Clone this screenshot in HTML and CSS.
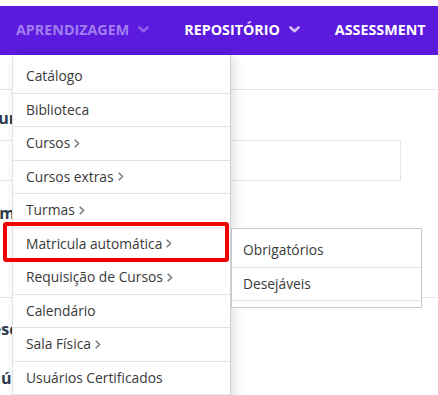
FILE: index.html
```html
<!DOCTYPE html>
<html lang="pt-BR">
	<head>
		<meta charset="UTF-8" />
		<meta name="viewport" content="width=device-width, initial-scale=1.0" />
		<title>Aprendizagem</title>
		<link rel="stylesheet" href="styles.css">
	</head>
	<body>
		<div class="topbar">
			<nav class="nav">
				<a class="nav-item active">APRENDIZAGEM
					<svg class="caret" width="11" height="7" viewBox="0 0 11 7"><path d="M1.5 1.5L5.5 5.2L9.5 1.5" /></svg>
				</a>
				<a class="nav-item">REPOSITÓRIO
					<svg class="caret" width="11" height="7" viewBox="0 0 11 7"><path d="M1.5 1.5L5.5 5.2L9.5 1.5" /></svg>
				</a>
				<a class="nav-item">ASSESSMENT</a>
			</nav>
		</div>

		<!-- page behind the dropdown -->
		<main class="page">
			<div class="page-head"></div>
			<h2 class="section-title t-cursos">Cursos</h2>
			<div class="field"></div>
			<h2 class="section-title t-admin">Administração</h2>
			<div class="rule"></div>
			<h2 class="section-title t-desc">Descrição</h2>
			<h2 class="section-title t-mult">Múltipla</h2>
		</main>

		<ul class="menu">
			<li>Catálogo</li>
			<li>Biblioteca</li>
			<li>Cursos <svg class="arrow" width="6" height="9" viewBox="0 0 6 9"><path d="M1.2 1.2L4.6 4.5L1.2 7.8" /></svg></li>
			<li>Cursos extras <svg class="arrow" width="6" height="9" viewBox="0 0 6 9"><path d="M1.2 1.2L4.6 4.5L1.2 7.8" /></svg></li>
			<li>Turmas <svg class="arrow" width="6" height="9" viewBox="0 0 6 9"><path d="M1.2 1.2L4.6 4.5L1.2 7.8" /></svg></li>
			<li>Matricula automática <svg class="arrow" width="6" height="9" viewBox="0 0 6 9"><path d="M1.2 1.2L4.6 4.5L1.2 7.8" /></svg></li>
			<li>Requisição de Cursos <svg class="arrow" width="6" height="9" viewBox="0 0 6 9"><path d="M1.2 1.2L4.6 4.5L1.2 7.8" /></svg></li>
			<li>Calendário</li>
			<li>Sala Física <svg class="arrow" width="6" height="9" viewBox="0 0 6 9"><path d="M1.2 1.2L4.6 4.5L1.2 7.8" /></svg></li>
			<li>Usuários Certificados</li>
		</ul>

		<ul class="submenu">
			<li>Obrigatórios</li>
			<li>Desejáveis</li>
		</ul>

		<div class="highlight"></div>
	</body>
</html>
```

FILE: styles.css
```css
html, body {
	margin: 0;
	padding: 0;
}
body {
	width: 438px;
	height: 395px;
	overflow: hidden;
	position: relative;
	background: #fff;
	font-family: "Open Sans", sans-serif;
	color: #333;
}
.topbar {
	margin-top: 6px;
	height: 49px;
	background: #5b1ade;
}
.nav {
	display: flex;
	align-items: center;
	height: 100%;
	padding-left: 16px;
	gap: 35px;
}
.nav-item {
	display: flex;
	align-items: center;
	gap: 9px;
	font-size: 14.3px;
	font-weight: 700;
	color: #fff;
	white-space: nowrap;
	margin-top: -2px;
}
.nav-item.active {
	color: #a27ff0;
}
.caret {
	opacity: 0.7;
}
.caret path {
	fill: none;
	stroke: currentColor;
	stroke-width: 2.6;
	stroke-linecap: round;
	stroke-linejoin: round;
}

/* background page */
.page {
	display: flex;
	flex-direction: column;
}
.page-head {
	height: 34px;
	border-bottom: 1px solid #e6e6e6;
}
.section-title {
	margin: 0;
	font-size: 16px;
	font-weight: 700;
	color: #2c3a4e;
	white-space: nowrap;
}
.t-cursos {
	margin: 17px 0 0 -12px;
}
.field {
	margin: 11px 0 0 -20px;
	width: 419px;
	height: 39px;
	border: 1px solid #e6e6e6;
}
.t-admin {
	margin: 21px 0 0 -22px;
}
.rule {
	margin-top: 73px;
	border-top: 1px solid #e6e6e6;
}
.t-desc {
	margin: 20px 0 0 -20px;
}
.t-mult {
	margin: 27px 0 0 -14px;
}

/* dropdown */
.menu {
	position: absolute;
	left: 12px;
	top: 55px;
	width: 217px;
	margin: 0;
	padding: 5px 0 0;
	list-style: none;
	background: #fff;
	border-left: 1px solid #e2e2e2;
	border-right: 1px solid #cfcfcf;
	box-shadow: 3px 0 10px rgba(0, 0, 0, 0.12);
	height: 360px;
}
.menu li,
.submenu li {
	display: flex;
	align-items: center;
	gap: 4px;
	padding: 8px 13px;
	line-height: 16.5px;
	font-size: 13.8px;
	color: #3a3a3a;
	border-bottom: 1px solid #e3e3e3;
	white-space: nowrap;
}
.arrow path {
	fill: none;
	stroke: #7a7a7a;
	stroke-width: 1.6;
	stroke-linecap: round;
	stroke-linejoin: round;
}
.submenu {
	position: absolute;
	left: 231px;
	top: 228px;
	width: 189px;
	margin: 0;
	padding: 5px 0 6px;
	list-style: none;
	background: #fff;
	border: 1px solid #c9c9c9;
}
.submenu li {
	padding-left: 11px;
}
.highlight {
	position: absolute;
	left: 3px;
	top: 222px;
	width: 218px;
	height: 32px;
	border: 4px solid #f20000;
	border-radius: 3px;
}
```
